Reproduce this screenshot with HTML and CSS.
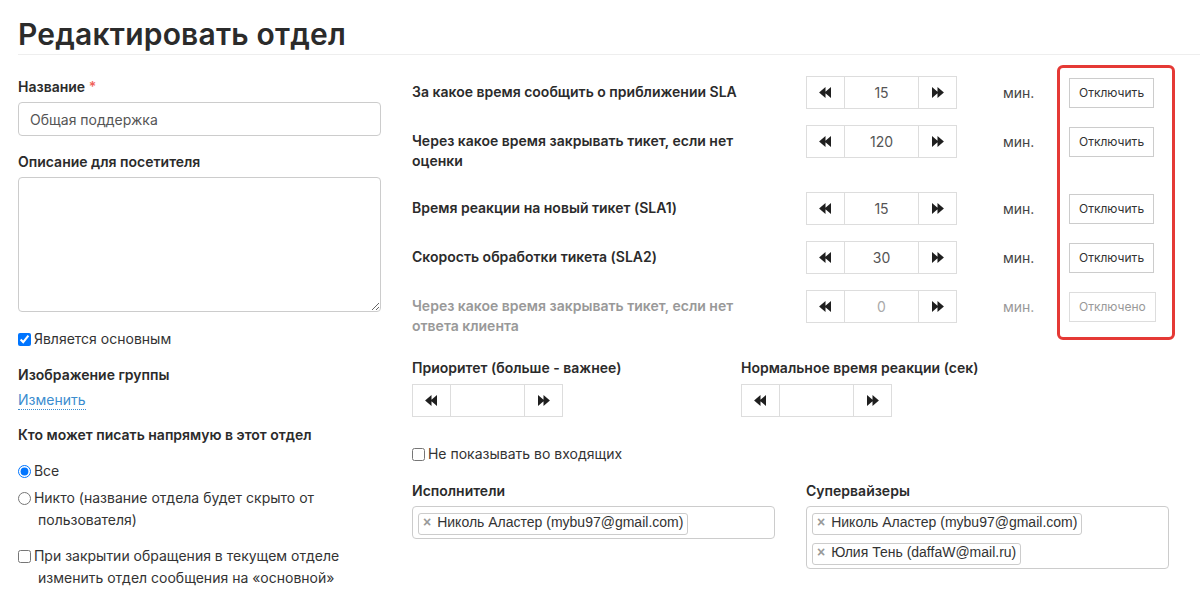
FILE: index.html
```html
<!DOCTYPE html>
<html lang="ru">
<head>
    <meta charset="UTF-8">
    <title>Редактировать отдел</title>
    <link rel="stylesheet" href="styles.css">
</head>
<body>
    <svg width="0" height="0" class="defs">
        <symbol id="back" viewBox="0 0 14 12"><path d="M0 6L7 0V12Z M6 6L13 0V12Z"/></symbol>
        <symbol id="fwd" viewBox="0 0 14 12"><path d="M1 0L8 6L1 12Z M7 0L14 6L7 12Z"/></symbol>
    </svg>

    <div class="page">
        <h1 class="title">Редактировать отдел</h1>

        <div class="layout">
            <div class="col-left">
                <label class="label">Название <span class="req">*</span></label>
                <input class="text-input" type="text" value="Общая поддержка">

                <label class="label">Описание для посетителя</label>
                <textarea class="text-area"></textarea>

                <label class="check first-check"><input type="checkbox" checked> Является основным</label>

                <div class="label">Изображение группы</div>
                <a class="link" href="#">Изменить</a>

                <div class="label who">Кто может писать напрямую в этот отдел</div>
                <label class="check radio-all"><input type="radio" name="who" checked> Все</label>
                <label class="check wrap"><input type="radio" name="who"> Никто (название отдела будет скрыто от пользователя)</label>
                <label class="check wrap last"><input type="checkbox"> При закрытии обращения в текущем отделе изменить отдел сообщения на «основной»</label>
            </div>

            <div class="col-right">
                <div class="sla">
                    <div class="sla-labels">
                        <div class="slot sla-label">За какое время сообщить о приближении SLA</div>
                        <div class="slot tall sla-label">Через какое время закрывать тикет, если нет оценки</div>
                        <div class="slot sla-label">Время реакции на новый тикет (SLA1)</div>
                        <div class="slot sla-label">Скорость обработки тикета (SLA2)</div>
                        <div class="slot sla-label muted">Через какое время закрывать тикет, если нет ответа клиента</div>
                    </div>
                    <div class="sla-controls">
                        <div class="slot">
                            <div class="spinner"><button class="spin-btn"><svg><use href="#back"/></svg></button><input class="spin-val" value="15"><button class="spin-btn"><svg><use href="#fwd"/></svg></button></div>
                            <span class="unit">мин.</span>
                        </div>
                        <div class="slot tall">
                            <div class="spinner"><button class="spin-btn"><svg><use href="#back"/></svg></button><input class="spin-val" value="120"><button class="spin-btn"><svg><use href="#fwd"/></svg></button></div>
                            <span class="unit">мин.</span>
                        </div>
                        <div class="slot">
                            <div class="spinner"><button class="spin-btn"><svg><use href="#back"/></svg></button><input class="spin-val" value="15"><button class="spin-btn"><svg><use href="#fwd"/></svg></button></div>
                            <span class="unit">мин.</span>
                        </div>
                        <div class="slot">
                            <div class="spinner"><button class="spin-btn"><svg><use href="#back"/></svg></button><input class="spin-val" value="30"><button class="spin-btn"><svg><use href="#fwd"/></svg></button></div>
                            <span class="unit">мин.</span>
                        </div>
                        <div class="slot off">
                            <div class="spinner"><button class="spin-btn"><svg><use href="#back"/></svg></button><input class="spin-val" value="0"><button class="spin-btn"><svg><use href="#fwd"/></svg></button></div>
                            <span class="unit">мин.</span>
                        </div>
                    </div>
                    <div class="sla-toggles">
                        <div class="slot"><button class="toggle-btn">Отключить</button></div>
                        <div class="slot tall"><button class="toggle-btn">Отключить</button></div>
                        <div class="slot"><button class="toggle-btn">Отключить</button></div>
                        <div class="slot"><button class="toggle-btn">Отключить</button></div>
                        <div class="slot"><button class="toggle-btn disabled">Отключено</button></div>
                    </div>
                </div>

                <div class="prio-row">
                    <div class="prio">
                        <div class="label">Приоритет (больше - важнее)</div>
                        <div class="spinner"><button class="spin-btn"><svg><use href="#back"/></svg></button><input class="spin-val" value=""><button class="spin-btn"><svg><use href="#fwd"/></svg></button></div>
                    </div>
                    <div class="prio">
                        <div class="label">Нормальное время реакции (сек)</div>
                        <div class="spinner"><button class="spin-btn"><svg><use href="#back"/></svg></button><input class="spin-val" value=""><button class="spin-btn"><svg><use href="#fwd"/></svg></button></div>
                    </div>
                </div>

                <label class="check inbox"><input type="checkbox"> Не показывать во входящих</label>

                <div class="people">
                    <div>
                        <div class="label">Исполнители</div>
                        <div class="tag-box">
                            <span class="tag"><span class="tag-x">×</span>Николь Аластер (mybu97@gmail.com)</span>
                        </div>
                    </div>
                    <div>
                        <div class="label">Супервайзеры</div>
                        <div class="tag-box">
                            <span class="tag"><span class="tag-x">×</span>Николь Аластер (mybu97@gmail.com)</span>
                            <span class="tag"><span class="tag-x">×</span>Юлия Тень (daffaW@mail.ru)</span>
                        </div>
                    </div>
                </div>
            </div>
        </div>
    </div>
</body>
</html>
```

FILE: styles.css
```css
body {
    margin: 0;
    font-family: Inter, "Noto Sans", sans-serif;
    color: #222;
    background: #fff;
    font-size: 14px;
}

.defs {
    position: absolute;
}

.page {
    padding: 0 0 0 18px;
}

.title {
    margin: 0;
    padding: 16px 0 2px;
    font-size: 30px;
    line-height: 36px;
    font-weight: 600;
    letter-spacing: 0.2px;
    color: #2b2b2b;
    border-bottom: 1px solid #eee;
}

.layout {
    display: grid;
    grid-template-columns: 363px 757px;
    gap: 31px;
}

.label {
    display: block;
    font-weight: 600;
    font-size: 14px;
    color: #2b2b2b;
    line-height: 20px;
}

.req {
    color: #f0625a;
}

.col-left {
    padding-top: 22px;
}

.text-input {
    display: block;
    box-sizing: border-box;
    width: 363px;
    height: 34px;
    margin: 5px 0 16px;
    padding: 0 11px;
    border: 1px solid #ccc;
    border-radius: 4px;
    font: 14px Inter, sans-serif;
    color: #555;
}

.text-area {
    display: block;
    box-sizing: border-box;
    width: 363px;
    height: 135px;
    margin: 5px 0 16px;
    border: 1px solid #ccc;
    border-radius: 4px;
}

.check {
    display: block;
    font-size: 14px;
    line-height: 22px;
    color: #333;
}

.check input {
    margin: 0 -1px 0 0;
    width: 13px;
    height: 13px;
    vertical-align: -2px;
}

.first-check {
    margin-bottom: 15px;
}

.link {
    display: inline-block;
    margin: 5px 0 15px;
    color: #3c8dcf;
    text-decoration: none;
    border-bottom: 1px dotted #3c8dcf;
    line-height: 19px;
}

.who {
    margin-bottom: 15px;
}

.radio-all {
    margin-bottom: 5px;
}

.check.wrap {
    padding-left: 20px;
    text-indent: -20px;
}

.check.last {
    margin-top: 14px;
}

.col-right {
    padding-top: 21px;
}

.sla {
    display: flex;
    align-items: flex-start;
}

.sla > div {
    flex-shrink: 0;
}

.slot {
    display: flex;
    align-items: center;
    height: 33px;
    margin-bottom: 16px;
}

.slot.tall {
    margin-bottom: 34px;
}

.slot:last-child {
    margin-bottom: 0;
}

.sla-labels {
    width: 394px;
}

.sla-label {
    align-items: flex-start;
    box-sizing: border-box;
    padding: 6px 34px 0 0;
    font-weight: 600;
    line-height: 20px;
    color: #2b2b2b;
}

.sla-label.muted {
    color: #999;
}

.sla-controls {
    width: 251px;
}

.spinner {
    display: flex;
    height: 33px;
}

.spin-btn {
    box-sizing: border-box;
    width: 39px;
    height: 33px;
    padding: 0;
    border: 1px solid #ddd;
    background: #fff;
    display: flex;
    align-items: center;
    justify-content: center;
}

.spin-btn svg {
    width: 13px;
    height: 11px;
    fill: #1f1f1f;
}

.spin-val {
    box-sizing: border-box;
    width: 73px;
    height: 33px;
    border: 1px solid #ddd;
    border-left: none;
    border-right: none;
    text-align: center;
    font: 14px Inter, sans-serif;
    color: #555;
    padding: 0;
}

.off .spin-val {
    color: #aaa;
}

.unit {
    margin-left: 46px;
    color: #444;
}

.off .unit {
    color: #999;
}

.sla-toggles {
    box-sizing: border-box;
    width: 118px;
    margin-top: -11px;
    padding: 8px 0 14px 9px;
    border: 3px solid #e53935;
    border-radius: 6px;
}

.toggle-btn {
    box-sizing: border-box;
    height: 30px;
    padding: 0 9px;
    border: 1px solid #ccc;
    background: #fff;
    font: 12px Inter, sans-serif;
    color: #333;
}

.toggle-btn.disabled {
    color: #999;
    border-color: #ddd;
}

.prio-row {
    display: flex;
    margin-top: 18px;
}

.prio {
    width: 329px;
}

.prio .label {
    margin-bottom: 6px;
}

.check.inbox {
    margin: 26px 0 16px;
}

.people {
    display: grid;
    grid-template-columns: 363px 363px;
    gap: 31px;
}

.people .label {
    margin-bottom: 5px;
}

.tag-box {
    box-sizing: border-box;
    border: 1px solid #ccc;
    border-radius: 4px;
    padding: 6px 5px 3px;
    display: flex;
    flex-direction: column;
    align-items: flex-start;
    gap: 8px;
}

.tag {
    box-sizing: border-box;
    height: 22px;
    line-height: 20px;
    padding: 0 4px;
    border: 1px solid #ccc;
    border-radius: 3px;
    font: 14px "Liberation Sans", Arial, sans-serif;
    color: #333;
    white-space: nowrap;
}

.tag-x {
    color: #999;
    font-weight: bold;
    margin-right: 6px;
}
```
